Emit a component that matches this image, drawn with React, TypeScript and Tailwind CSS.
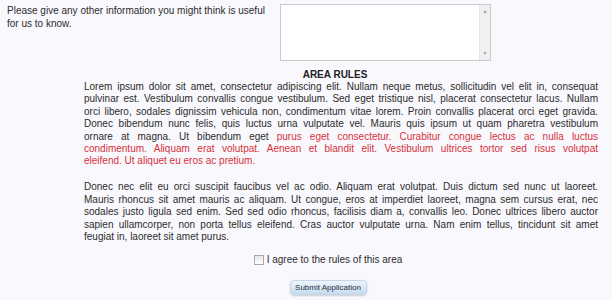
import { useState } from 'react';

const para1: Array<{ text: string; red?: string; last?: boolean; allRed?: boolean }> = [
  { text: 'Lorem ipsum dolor sit amet, consectetur adipiscing elit. Nullam neque metus, sollicitudin vel elit in, consequat' },
  { text: 'pulvinar est. Vestibulum convallis congue vestibulum. Sed eget tristique nisl, placerat consectetur lacus. Nullam' },
  { text: 'orci libero, sodales dignissim vehicula non, condimentum vitae lorem. Proin convallis placerat orci eget gravida.' },
  { text: 'Donec bibendum nunc felis, quis luctus urna vulputate vel. Mauris quis ipsum ut quam pharetra vestibulum' },
  { text: 'ornare at magna. Ut bibendum eget ', red: 'purus eget consectetur. Curabitur congue lectus ac nulla luctus' },
  { text: 'condimentum. Aliquam erat volutpat. Aenean et blandit elit. Vestibulum ultrices tortor sed risus volutpat', allRed: true },
  { text: 'eleifend. Ut aliquet eu eros ac pretium.', allRed: true, last: true },
];

const para2: Array<{ text: string; last?: boolean }> = [
  { text: 'Donec nec elit eu orci suscipit faucibus vel ac odio. Aliquam erat volutpat. Duis dictum sed nunc ut laoreet.' },
  { text: 'Mauris rhoncus sit amet mauris ac aliquam. Ut congue, eros at imperdiet laoreet, magna sem cursus erat, nec' },
  { text: 'sodales justo ligula sed enim. Sed sed odio rhoncus, facilisis diam a, convallis leo. Donec ultrices libero auctor' },
  { text: 'sapien ullamcorper, non porta tellus eleifend. Cras auctor vulputate urna. Nam enim tellus, tincidunt sit amet' },
  { text: 'feugiat in, laoreet sit amet purus.', last: true },
];

function Line({ children, last }: { children: React.ReactNode; last?: boolean }) {
  return (
    <div className={last ? 'text-left whitespace-nowrap' : 'text-justify [text-align-last:justify] whitespace-nowrap'}>
      {children}
    </div>
  );
}

export default function App() {
  const [agree, setAgree] = useState(false);
  const [info, setInfo] = useState('');

  return (
    <div className="min-h-[300px] w-[612px] bg-[#f9f9fd] text-[10px] leading-[12.4px] text-[#2c2c2c] font-['Liberation_Sans',Arial,sans-serif]">
      {/* extra info row */}
      <div className="flex">
        <label className="w-[280px] shrink-0 pl-[7px] pt-[4px] leading-[13px]">
          Please give any other information you might think is useful
          <br />
          for us to know.
        </label>
        <div className="mt-[4px] flex h-[57px] w-[211px] border border-[#cbcbcb] bg-white">
          <textarea
            value={info}
            onChange={(e) => setInfo(e.target.value)}
            className="h-full flex-1 resize-none bg-white p-1 outline-none"
          />
          <div className="flex w-[11px] flex-col items-center justify-between border-l border-[#e6e6e6] bg-[#f0f0f0] py-[4px] text-[5px] leading-[5px] text-[#9a9a9a]">
            <span>▲</span>
            <span>▼</span>
          </div>
        </div>
      </div>

      {/* rules */}
      <div className="ml-[84px] w-[514px] pt-[8px]">
        <div className="pr-[12px] text-center font-bold leading-[12px] text-[#222]">AREA RULES</div>
        <div>
          {para1.map((l, i) => (
            <Line key={i} last={l.last}>
              {l.allRed ? <span className="text-[#d6303b]">{l.text}</span> : l.text}
              {l.red ? <span className="text-[#d6303b]">{l.red}</span> : null}
            </Line>
          ))}
          <div className="h-[13.5px]" />
          {para2.map((l, i) => (
            <Line key={i} last={l.last}>
              {l.text}
            </Line>
          ))}
        </div>
      </div>

      {/* agree + submit */}
      <div className="ml-[56px] w-[544px] pt-[11px]">
        <label className="flex items-center justify-center gap-[3px] leading-[12px]">
          <input
            type="checkbox"
            checked={agree}
            onChange={(e) => setAgree(e.target.checked)}
            className="m-0 h-[10px] w-[10px] appearance-none border border-[#a9a9a9] bg-gradient-to-b from-[#e6e6e6] to-white checked:bg-[#6a9bd1]"
          />
          <span>I agree to the rules of this area</span>
        </label>
        <div className="flex justify-center pt-[14px]">
          <button
            type="button"
            className="h-[15px] w-[77px] rounded-[4px] border border-[#c3d6e6] bg-gradient-to-b from-[#eef5fb] to-[#c6dcee] text-[8px] leading-[13px] text-[#1f2f3f] shadow-[0_1px_2px_rgba(0,0,0,0.18)]"
          >
            Submit Application
          </button>
        </div>
      </div>
    </div>
  );
}
